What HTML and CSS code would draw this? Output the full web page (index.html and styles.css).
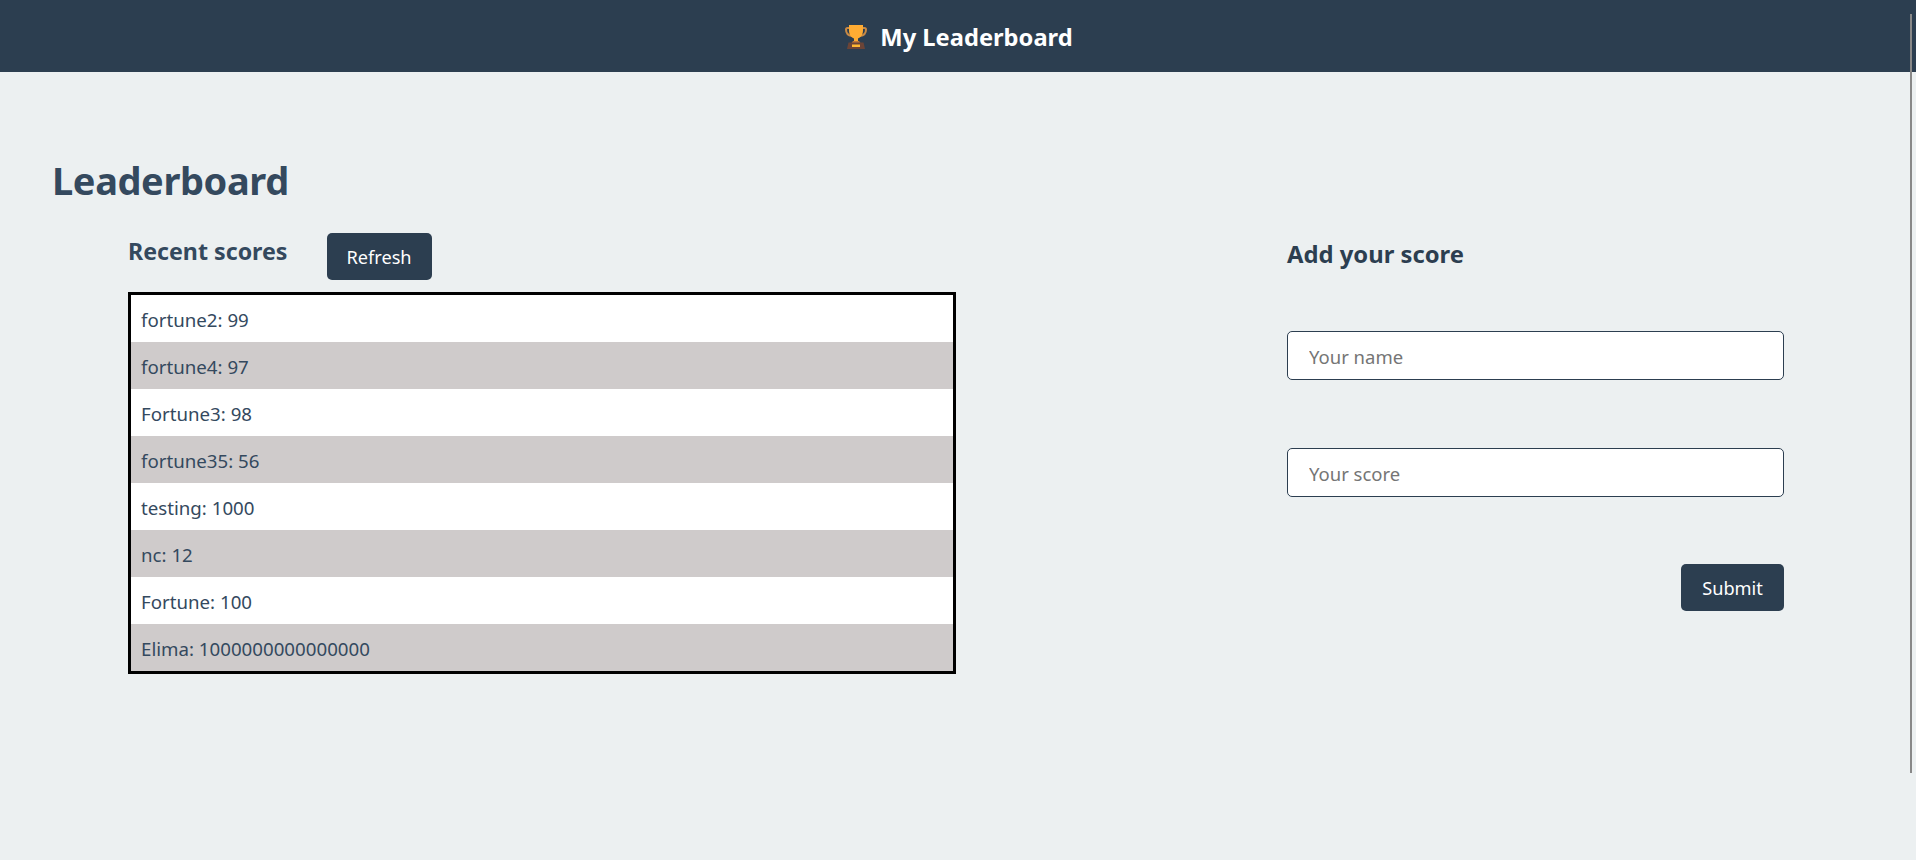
FILE: index.html
```html
<!DOCTYPE html>
<html lang="en">

<head>
    <meta charset="UTF-8">
    <meta name="viewport" content="width=device-width, initial-scale=1.0">
    <title>My Leaderboard</title>
    <link rel="stylesheet" href="styles.css">
</head>

<body>
    <!-- Top bar -->
    <header class="top-bar">
        <svg class="trophy" viewBox="0 0 22 25" width="22" height="25" aria-hidden="true">
            <path d="M5 3H2.500C1.500 3 1 3.700 1 4.500c0 3.500 2.500 6 6 6.500" fill="none" stroke="#c98a45" stroke-width="2"/>
            <path d="M17 3h2.500c1 0 1.500.7 1.500 1.500 0 3.500-2.500 6-6 6.500" fill="none" stroke="#c98a45" stroke-width="2"/>
            <path d="M4 0h14v5.500c0 4.500-2.500 7-5 8V17H9v-3.500c-2.500-1-5-3.500-5-8z" fill="#ffac33"/>
            <path d="M8 16h6l1.500 2h-9z" fill="#c1793a"/>
            <path d="M3.500 17.500h15L20 24H2z" fill="#6b4437"/>
            <rect x="7" y="19.500" width="8" height="2.500" fill="#ffb833"/>
        </svg>
        <span class="site-title">My Leaderboard</span>
    </header>

    <main class="page">
        <h1 class="page-title">Leaderboard</h1>

        <div class="columns">
            <!-- Score list -->
            <section class="scores">
                <div class="scores-head">
                    <h2 class="section-title recent-title">Recent scores</h2>
                    <button class="btn" type="button">Refresh</button>
                </div>
                <ul class="score-list">
                    <li>fortune2: 99</li>
                    <li>fortune4: 97</li>
                    <li>Fortune3: 98</li>
                    <li>fortune35: 56</li>
                    <li>testing: 1000</li>
                    <li>nc: 12</li>
                    <li>Fortune: 100</li>
                    <li>Elima: 1000000000000000</li>
                </ul>
            </section>

            <!-- Add score form -->
            <section class="add-score">
                <h2 class="section-title">Add your score</h2>
                <form class="score-form">
                    <input class="field" type="text" placeholder="Your name">
                    <input class="field" type="text" placeholder="Your score">
                    <button class="btn submit-btn" type="button">Submit</button>
                </form>
            </section>
        </div>
    </main>

    <!-- Scrollbar thumb -->
    <div class="scroll-thumb"></div>
</body>

</html>
```

FILE: styles.css
```css
* {
    box-sizing: border-box;
}

html,
body {
    height: 100%;
    overflow: hidden;
}

body {
    margin: 0;
    background-color: #ecf0f1;
    color: #2c3e50;
    font-family: "Noto Sans", "Open Sans", sans-serif;
}

.top-bar {
    height: 72px;
    display: flex;
    align-items: center;
    justify-content: center;
    gap: 13px;
    padding-left: 2px;
    background-color: #2c3e50;
    color: white;
}

.trophy {
    margin-top: 2px;
}

.site-title {
    padding-top: 2px;
    font-size: 23.7px;
    font-weight: 700;
}

.page {
    padding: 85px 132px 0 52px;
}

.page-title {
    margin: 0;
    color: #34495e;
    font-size: 38px;
    line-height: 46px;
    font-weight: 700;
    letter-spacing: -0.4px;
}

.columns {
    display: flex;
    justify-content: space-between;
    margin-top: 30px;
    padding-left: 76px;
}

.section-title {
    margin: 0;
    font-size: 23.8px;
    line-height: 32px;
    font-weight: 700;
}

.recent-title {
    margin-top: 2px;
    color: #34495e;
    font-size: 23.2px;
}

.scores {
    width: 828px;
}

.scores-head {
    display: flex;
    align-items: flex-start;
    gap: 39px;
    height: 59px;
}

.btn {
    width: 105px;
    height: 47px;
    padding: 1px 0 0;
    border: none;
    border-radius: 5px;
    background-color: #2c3e50;
    color: white;
    font-family: inherit;
    font-size: 18.2px;
}

.submit-btn {
    width: 103px;
    margin-top: -1px;
}

.score-list {
    margin: 0;
    padding: 0;
    list-style: none;
    border: 3px solid black;
    background-color: white;
    color: #34495e;
}

.score-list li {
    height: 47px;
    padding: 1px 10px 0;
    font-size: 18.7px;
    line-height: 47px;
}

.score-list li:nth-child(even) {
    background-color: #cfcbcb;
}

.add-score {
    width: 497px;
    padding-top: 5px;
}

.score-form {
    display: flex;
    flex-direction: column;
    align-items: flex-end;
    margin-top: 61px;
}

.field {
    width: 100%;
    height: 49px;
    margin-bottom: 68px;
    padding: 2px 21px 0;
    border: 1px solid #2c3e50;
    border-radius: 5px;
    background-color: white;
    font-family: inherit;
    font-size: 18.5px;
}

.field::placeholder {
    color: #757575;
}

.scroll-thumb {
    position: fixed;
    top: 14px;
    left: 1910px;
    width: 2px;
    height: 759px;
    background-color: #888;
}
```
